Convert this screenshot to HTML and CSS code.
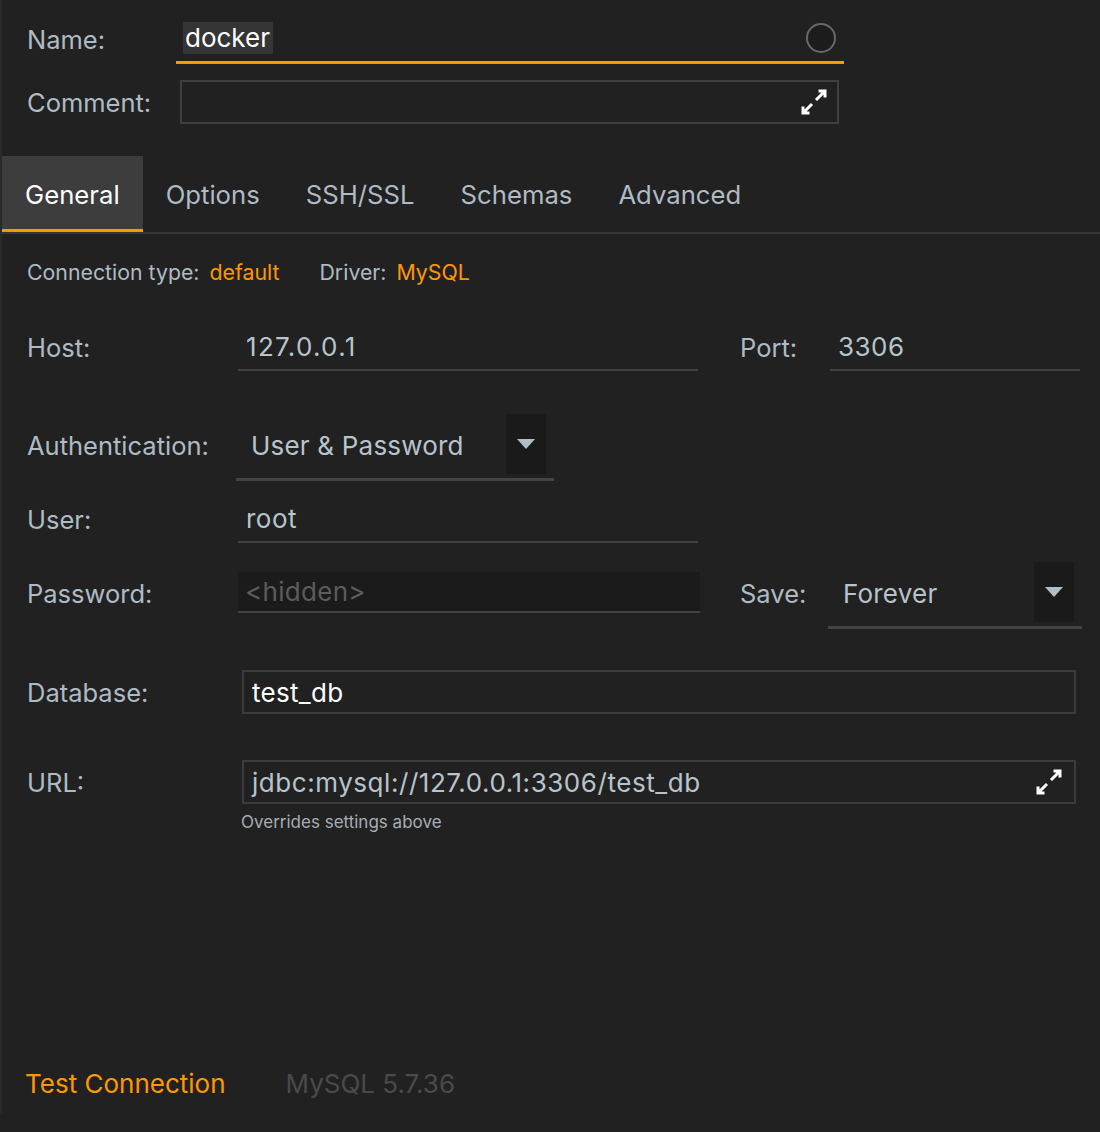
FILE: index.html
```html
<!DOCTYPE html>
<html>
<head>
<meta charset="utf-8">
<link rel="stylesheet" href="styles.css">
</head>
<body>
<div class="dialog">
  <div class="row name-row">
    <div class="lbl top-lbl">Name:</div>
    <div class="name-field">
      <span class="name-sel">docker</span>
      <span class="circle"></span>
    </div>
  </div>
  <div class="row comment-row">
    <div class="lbl top-lbl">Comment:</div>
    <div class="comment-box">
      <svg class="expand" width="26" height="26" viewBox="0 0 26 26"><path d="M15 11 L24 2 M17.5 2 H24 V8.5 M11 15 L2 24 M2 17.5 V24 H8.5" fill="none" stroke="#fff" stroke-width="3"/></svg>
    </div>
  </div>
  <div class="tabs">
    <div class="tab active">General</div>
    <div class="tab">Options</div>
    <div class="tab">SSH/SSL</div>
    <div class="tab">Schemas</div>
    <div class="tab">Advanced</div>
  </div>
  <div class="conn-row">
    <span class="small-lbl">Connection type:</span><span class="accent">default</span>
    <span class="small-lbl driver">Driver:</span><span class="accent">MySQL</span>
  </div>
  <div class="row host-row">
    <div class="lbl">Host:</div>
    <div class="line-input host ip">127.0.0.1</div>
    <div class="lbl port-lbl">Port:</div>
    <div class="line-input port">3306</div>
  </div>
  <div class="row auth-row">
    <div class="lbl">Authentication:</div>
    <div class="combo auth-combo">
      <span class="combo-text">User &amp; Password</span>
      <span class="combo-btn"><span class="tri"></span></span>
    </div>
  </div>
  <div class="row user-row">
    <div class="lbl">User:</div>
    <div class="line-input host">root</div>
  </div>
  <div class="row pass-row">
    <div class="lbl">Password:</div>
    <div class="pass-input">&lt;hidden&gt;</div>
    <div class="lbl save-lbl">Save:</div>
    <div class="combo save-combo">
      <span class="combo-text">Forever</span>
      <span class="combo-btn"><span class="tri"></span></span>
    </div>
  </div>
  <div class="row db-row">
    <div class="lbl">Database:</div>
    <div class="box-input db">test_db</div>
  </div>
  <div class="row url-row">
    <div class="lbl">URL:</div>
    <div class="box-input url">jdbc:mysql://127.0.0.1:3306/test_db
      <svg class="expand" width="26" height="26" viewBox="0 0 26 26"><path d="M15 11 L24 2 M17.5 2 H24 V8.5 M11 15 L2 24 M2 17.5 V24 H8.5" fill="none" stroke="#fff" stroke-width="3"/></svg>
    </div>
  </div>
  <div class="hint">Overrides settings above</div>
  <div class="footer">
    <span class="test-conn">Test Connection</span>
    <span class="version">MySQL 5.7.36</span>
  </div>
</div>
</body>
</html>
```

FILE: styles.css
```css
html, body {
  margin: 0;
  padding: 0;
  background: #212121;
}
body {
  width: 1100px;
  height: 1132px;
  overflow: hidden;
  font-family: "Inter", "Liberation Sans", sans-serif;
  color: #aebbc4;
}
.dialog {
  height: 1113px;
  border-left: 2px solid #2a2a2a;
  box-sizing: border-box;
  display: flex;
  flex-direction: column;
}
.row {
  display: flex;
  align-items: center;
}
.lbl {
  font-size: 25.5px;
  color: #aebbc4;
  padding-left: 25px;
  width: 211px;
  flex: none;
}
.name-row {
  margin-top: 18px;
  height: 46px;
}
.name-row .lbl {
  width: 149px;
  margin-top: -4px;
}
.name-field {
  width: 668px;
  height: 46px;
  box-sizing: border-box;
  border-bottom: 3px solid #ff9800;
  display: flex;
  align-items: center;
  justify-content: space-between;
  padding: 0 8px 0 7px;
}
.name-sel {
  background: #353535;
  color: #ffffff;
  font-size: 26px;
  line-height: 32px;
  padding: 0 3px 0 2px;
  margin-top: -4px;
}
.circle {
  width: 26px;
  height: 26px;
  border-radius: 50%;
  border: 2px solid #686868;
  background: #1c1c1c;
  margin-top: -4px;
}
.comment-row {
  margin-top: 16px;
  height: 44px;
}
.comment-row .lbl {
  width: 153px;
}
.comment-box {
  width: 659px;
  height: 44px;
  box-sizing: border-box;
  border: 2px solid #3f3f3f;
  display: flex;
  align-items: center;
  justify-content: flex-end;
  padding-right: 10px;
}
.tabs {
  margin-top: 32px;
  display: flex;
  height: 76px;
  border-bottom: 2px solid #363636;
}
.tab {
  font-size: 25.7px;
  padding: 3px 23px 0;
  display: flex;
  align-items: center;
  color: #aebbc4;
  border-bottom: 3px solid transparent;
  box-sizing: border-box;
  height: 76px;
}
.tab.active {
  background: #3d3d3d;
  color: #ffffff;
  border-bottom-color: #ff9800;
}
.conn-row {
  margin-top: 23px;
  height: 30px;
  display: flex;
  align-items: center;
  padding-left: 25px;
  font-size: 21.3px;
}
.small-lbl {
  color: #aebbc4;
  margin-right: 10px;
}
.accent {
  color: #ff9800;
}
.driver {
  margin-left: 40px;
}
.line-input {
  height: 47px;
  box-sizing: border-box;
  border-bottom: 2px solid #424242;
  font-size: 26px;
  display: flex;
  align-items: center;
  padding-left: 8px;
  color: #b8c4cc;
  letter-spacing: 0.5px;
}
.ip {
  letter-spacing: 1.3px;
}
.host {
  width: 460px;
}
.host-row {
  margin-top: 37px;
}
.port-lbl {
  width: 90px;
  padding-left: 42px;
}
.port {
  width: 250px;
}
.auth-row {
  margin-top: 43px;
  height: 67px;
}
.auth-row .lbl {
  margin-top: -5px;
}
.combo {
  height: 67px;
  box-sizing: border-box;
  border-bottom: 3px solid #444;
  display: flex;
  align-items: flex-start;
  justify-content: space-between;
}
.combo-text {
  font-size: 26px;
  line-height: 64px;
  color: #b8c4cc;
  padding-left: 15px;
  letter-spacing: 0.2px;
}
.combo-btn {
  width: 40px;
  height: 60px;
  background: #1a1a1a;
  display: flex;
  align-items: center;
  justify-content: center;
}
.tri {
  width: 0;
  height: 0;
  border-left: 9px solid transparent;
  border-right: 9px solid transparent;
  border-top: 10px solid #b0bec5;
}
.auth-combo {
  width: 318px;
  margin-left: -2px;
  padding-right: 8px;
}
.user-row {
  margin-top: 15px;
}
.pass-row {
  margin-top: 19px;
  height: 62px;
  align-items: flex-start;
}
.pass-row .lbl {
  align-self: center;
}
.pass-input {
  margin-top: 10px;
  width: 462px;
  height: 41px;
  box-sizing: border-box;
  background: #1b1b1b;
  border-bottom: 2px solid #424242;
  font-size: 26px;
  color: #5c5c5c;
  padding-left: 7px;
  display: flex;
  align-items: center;
  letter-spacing: 0.3px;
}
.save-lbl {
  width: 88px;
  padding-left: 40px;
}
.save-combo {
  width: 254px;
  padding-right: 8px;
  flex: none;
}
.db-row {
  margin-top: 46px;
  height: 44px;
}
.box-input {
  width: 834px;
  height: 44px;
  box-sizing: border-box;
  border: 2px solid #3c3c3c;
  font-size: 26px;
  display: flex;
  align-items: center;
  justify-content: space-between;
  padding: 0 12px 0 8px;
  margin-left: 4px;
  letter-spacing: 0.3px;
}
.db {
  color: #ffffff;
}
.url {
  color: #b8c4cc;
  letter-spacing: 0.55px;
}
.url-row {
  margin-top: 46px;
  height: 44px;
}
.hint {
  margin-top: 8px;
  padding-left: 239px;
  font-size: 17px;
  line-height: 20px;
  color: #a4afb6;
}
.footer {
  margin-top: auto;
  padding-bottom: 15px;
  padding-left: 23px;
  display: flex;
  align-items: center;
  height: 30px;
  font-size: 26px;
}
.test-conn {
  color: #ff9800;
}
.version {
  color: #4a4a4a;
  margin-left: 60px;
}
```
